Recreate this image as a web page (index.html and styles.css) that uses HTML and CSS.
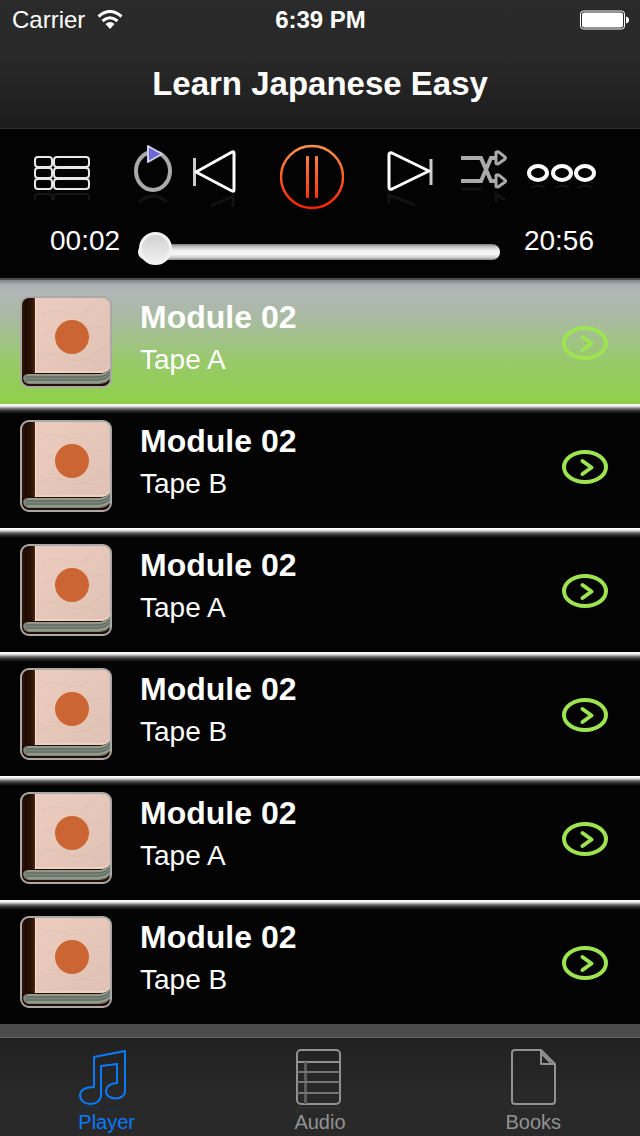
FILE: index.html
```html
<!DOCTYPE html>
<html lang="en">
<head>
    <meta charset="UTF-8">
    <meta name="viewport" content="width=device-width, initial-scale=1.0">
    <title>Learn Japanese Easy</title>
    <link rel="stylesheet" href="styles.css">
</head>
<body>
    <!-- Shared drawings -->
    <svg class="defs" aria-hidden="true">
        <defs>
            <linearGradient id="spine" x1="0" x2="1" y1="0" y2="0">
                <stop offset="0" stop-color="#4a2008"/>
                <stop offset="0.35" stop-color="#1c0a02"/>
                <stop offset="0.75" stop-color="#2a1205"/>
                <stop offset="1" stop-color="#4b260e"/>
            </linearGradient>
            <linearGradient id="cover" x1="0" x2="1" y1="0" y2="1">
                <stop offset="0" stop-color="#ecccbf"/>
                <stop offset="1" stop-color="#dfc2b5"/>
            </linearGradient>
            <linearGradient id="fire" x1="0" x2="0" y1="6" y2="68" gradientUnits="userSpaceOnUse">
                <stop offset="0" stop-color="#ff9152"/>
                <stop offset="0.5" stop-color="#ff5a22"/>
                <stop offset="1" stop-color="#ff2400"/>
            </linearGradient>
            <clipPath id="bookClip"><rect x="1" y="1" width="90" height="90" rx="8"/></clipPath>
            <symbol id="book" viewBox="0 0 92 92">
                <g clip-path="url(#bookClip)">
                    <rect width="92" height="92" fill="#260d04"/>
                    <path d="M15 0H92V68Q90 77 80 77H15Z" fill="url(#cover)"/>
                    <path d="M15 76H80Q89 76 91 69" fill="none" stroke="#f8dfc8" stroke-width="1"/>
                    <path d="M22 18Q34 12 46 17T72 12M20 62Q36 54 48 62T84 50M66 30Q74 36 88 28M22 40L34 34M60 62L82 66" fill="none" stroke="#d3b3a7" stroke-width="1" opacity="0.3"/>
                    <rect width="15" height="77" fill="url(#spine)"/>
                    <path d="M15.500 0V77" stroke="#f6e2da" stroke-width="1"/>
                    <path d="M8 78H80Q88 77 92 71V80Q88 88 79 88H10Q4 88 3 82Q4 78 8 78Z" fill="#7e877b"/>
                    <path d="M6 81H80Q87 80 91 74M6 84H80Q87 83 91 78" fill="none" stroke="#59635a" stroke-width="1"/>
                    <path d="M8 79H80Q87 78 91 73M8 86H79Q87 85 91 80" fill="none" stroke="#a3aca0" stroke-width="1"/>
                    <circle cx="52" cy="41" r="17" fill="#cb6634"/>
                </g>
                <rect x="1" y="1" width="90" height="90" rx="8" fill="none" stroke="#a9a9a9" stroke-width="2"/>
            </symbol>
            <symbol id="arrow" viewBox="0 0 46 34">
                <ellipse cx="23" cy="17" rx="21" ry="15" fill="none" stroke="#9ee451" stroke-width="4"/>
                <path d="M20.500 11L29.500 17.500L20.500 24" fill="none" stroke="#9ee451" stroke-width="4" stroke-linecap="round" stroke-linejoin="round"/>
            </symbol>
        </defs>
    </svg>

    <header class="navbar">
        <div class="status">
            <div class="carrier">
                <span>Carrier</span>
                <svg width="26" height="20" viewBox="0 0 26 20">
                    <path d="M1.500 6.500Q13 -3.500 24.500 6.500M5.500 11Q13 4.500 20.500 11" fill="none" stroke="#fff" stroke-width="3"/>
                    <path d="M8.500 14Q13 10 17.500 14L13 19Z" fill="#fff"/>
                </svg>
            </div>
            <span class="clock">6:39 PM</span>
            <svg class="battery" width="49" height="20" viewBox="0 0 49 20">
                <rect x="0.500" y="1" width="44" height="18" rx="3" fill="none" stroke="#fff"/>
                <rect x="2" y="2.500" width="41" height="15" rx="2" fill="#fff"/>
                <path d="M46 6.500Q49 7 49 10T46 13.500Z" fill="#fff"/>
            </svg>
        </div>
        <h1>Learn Japanese Easy</h1>
    </header>

    <section class="player">
        <div class="controls">
            <div class="side side-left">
                <button type="button" aria-label="Playlist">
                    <svg width="56" height="74" viewBox="0 0 56 74">
                        <g fill="none" stroke="#e8e8e8" stroke-width="2">
                            <rect x="1" y="17" width="17" height="10" rx="3"/>
                            <rect x="20" y="17" width="35" height="10" rx="3"/>
                            <rect x="1" y="28" width="17" height="10" rx="3"/>
                            <rect x="20" y="28" width="35" height="10" rx="3"/>
                            <rect x="1" y="39" width="17" height="10" rx="3"/>
                            <rect x="20" y="39" width="35" height="10" rx="3"/>
                        </g>
                        <path d="M1 60V56Q1 54 4 54H15Q18 54 18 56V60M20 60V56Q20 54 23 54H52Q55 54 55 56V60" fill="none" stroke="#161616" stroke-width="2"/>
                    </svg>
                </button>
                <div class="pair">
                    <button type="button" aria-label="Repeat">
                        <svg width="39" height="74" viewBox="0 0 39 74">
                            <ellipse cx="19" cy="31" rx="17" ry="19" fill="none" stroke="#aaa" stroke-width="4"/>
                            <path d="M14 6L28 14L14 22Z" fill="#6c66d6" stroke="#cfcfe8" stroke-width="2" stroke-linejoin="round"/>
                            <path d="M5 62Q19 50 33 62" fill="none" stroke="#121212" stroke-width="3"/>
                        </svg>
                    </button>
                    <button type="button" aria-label="Previous">
                        <svg width="43" height="74" viewBox="0 0 43 74">
                            <path d="M1.500 18V46" stroke="#ccc" stroke-width="3"/>
                            <path d="M3 32L39 12Q41 11 41 13V50Q41 52 39 51Z" fill="none" stroke="#fff" stroke-width="3" stroke-linejoin="round"/>
                            <path d="M18 66L40 56V66" fill="none" stroke="#121212" stroke-width="3"/>
                        </svg>
                    </button>
                </div>
            </div>
            <button type="button" aria-label="Pause">
                <svg width="64" height="74" viewBox="0 0 64 74">
                    <circle cx="32" cy="37" r="31" fill="none" stroke="url(#fire)" stroke-width="2.500"/>
                    <rect x="26" y="16" width="3" height="42" rx="1" fill="url(#fire)"/>
                    <rect x="35" y="16" width="3" height="42" rx="1" fill="url(#fire)"/>
                </svg>
            </button>
            <div class="side side-right">
                <button type="button" aria-label="Next">
                    <svg width="46" height="74" viewBox="0 0 46 74">
                        <path d="M44 19V45" stroke="#ccc" stroke-width="3"/>
                        <path d="M2 15Q2 12 5 13L42 31L5 49Q2 50 2 47Z" fill="none" stroke="#fff" stroke-width="3" stroke-linejoin="round"/>
                        <path d="M2 64V55L28 65" fill="none" stroke="#121212" stroke-width="3"/>
                    </svg>
                </button>
                <div class="pair">
                    <button type="button" aria-label="Shuffle">
                        <svg width="46" height="74" viewBox="0 0 46 74">
                            <g fill="none" stroke="#aaa" stroke-width="4">
                                <path d="M0 18H20L30 41H35M0 41H20L30 18H35"/>
                                <path d="M35 12.500Q37 11 39 13L44 17Q45 18 44 19L37 24Q35 24 35 23ZM35 35.500Q37 34 39 36L44 40Q45 41 44 42L37 47Q35 47 35 46Z" stroke-width="3"/>
                            </g>
                            <path d="M0 49H21M35 62V54L44 60" fill="none" stroke="#121212" stroke-width="3"/>
                        </svg>
                    </button>
                    <button type="button" aria-label="More">
                        <svg width="70" height="74" viewBox="0 0 70 74">
                            <g fill="none" stroke="#fff" stroke-width="4">
                                <ellipse cx="11" cy="33" rx="9" ry="7"/>
                                <ellipse cx="35" cy="33" rx="9" ry="7"/>
                                <ellipse cx="58" cy="33" rx="9" ry="7"/>
                            </g>
                            <path d="M4 48Q11 43 18 48M28 48Q35 43 42 48M51 48Q58 43 65 48" fill="none" stroke="#161616" stroke-width="2"/>
                        </svg>
                    </button>
                </div>
            </div>
        </div>
        <div class="progress">
            <span>00:02</span>
            <input type="range" min="0" max="1256" value="2" aria-label="Position">
            <span>20:56</span>
        </div>
    </section>

    <main>
        <ul class="tracks">
            <li class="track selected">
                <svg class="cover" width="92" height="92"><use href="#book"/></svg>
                <div class="info">
                    <h2>Module 02</h2>
                    <p>Tape A</p>
                </div>
                <button type="button" aria-label="Open Module 02, Tape A"><svg width="46" height="34"><use href="#arrow"/></svg></button>
            </li>
            <li class="track">
                <svg class="cover" width="92" height="92"><use href="#book"/></svg>
                <div class="info">
                    <h2>Module 02</h2>
                    <p>Tape B</p>
                </div>
                <button type="button" aria-label="Open Module 02, Tape B"><svg width="46" height="34"><use href="#arrow"/></svg></button>
            </li>
            <li class="track">
                <svg class="cover" width="92" height="92"><use href="#book"/></svg>
                <div class="info">
                    <h2>Module 02</h2>
                    <p>Tape A</p>
                </div>
                <button type="button" aria-label="Open Module 02, Tape A"><svg width="46" height="34"><use href="#arrow"/></svg></button>
            </li>
            <li class="track">
                <svg class="cover" width="92" height="92"><use href="#book"/></svg>
                <div class="info">
                    <h2>Module 02</h2>
                    <p>Tape B</p>
                </div>
                <button type="button" aria-label="Open Module 02, Tape B"><svg width="46" height="34"><use href="#arrow"/></svg></button>
            </li>
            <li class="track">
                <svg class="cover" width="92" height="92"><use href="#book"/></svg>
                <div class="info">
                    <h2>Module 02</h2>
                    <p>Tape A</p>
                </div>
                <button type="button" aria-label="Open Module 02, Tape A"><svg width="46" height="34"><use href="#arrow"/></svg></button>
            </li>
            <li class="track">
                <svg class="cover" width="92" height="92"><use href="#book"/></svg>
                <div class="info">
                    <h2>Module 02</h2>
                    <p>Tape B</p>
                </div>
                <button type="button" aria-label="Open Module 02, Tape B"><svg width="46" height="34"><use href="#arrow"/></svg></button>
            </li>
        </ul>
    </main>

    <nav class="tabbar">
        <a href="#player" class="active">
            <svg width="60" height="70" viewBox="0 0 60 70">
                <path d="M17 41V12L48 6V46C48 56 29 56 29 46Q29 39 40 38V19L24 21V50C24 62 3 62 3 50Q4 42 17 42Z" fill="none" stroke="currentColor" stroke-width="2" stroke-linejoin="round"/>
                <path d="M4 64Q13 58 23 64M29 66Q38 61 46 66" fill="none" stroke="#1c3047" stroke-width="2"/>
            </svg>
            <span>Player</span>
        </a>
        <a href="#audio">
            <svg width="60" height="70" viewBox="0 0 60 70">
                <g fill="none" stroke="currentColor" stroke-width="2">
                    <rect x="7" y="5" width="43" height="54" rx="4"/>
                    <path d="M7 17H50"/>
                    <path d="M15.500 17V59" stroke="#5c5c5c" stroke-width="3"/>
                    <path d="M7 27H50M7 37H50M7 48H50" stroke="#757575"/>
                </g>
                <path d="M7 67V64Q7 63 9 63H48Q50 63 50 65V67" fill="none" stroke="#303030" stroke-width="2"/>
            </svg>
            <span>Audio</span>
        </a>
        <a href="#books">
            <svg width="60" height="70" viewBox="0 0 60 70">
                <g fill="none" stroke="currentColor" stroke-width="2" stroke-linejoin="round">
                    <path d="M12 5H38L52 19V56Q52 59 49 59H12Q9 59 9 56V8Q9 5 12 5Z"/>
                    <path d="M38 5V19H52M38 8L48 18"/>
                </g>
                <path d="M9 67V65Q9 63 11 63H50Q52 63 52 65V67" fill="none" stroke="#303030" stroke-width="2"/>
            </svg>
            <span>Books</span>
        </a>
    </nav>
</body>
</html>
```
FILE: styles.css
```css
* {
    margin: 0;
    padding: 0;
    box-sizing: border-box;
}

body {
    display: flex;
    flex-direction: column;
    min-height: 100vh;
    background-color: #000;
    color: #fff;
    font-family: "Liberation Sans", Arial, sans-serif;
}

svg {
    display: block;
}

button {
    flex: none;
    background: none;
    border: none;
    cursor: pointer;
}

.defs {
    position: absolute;
    width: 0;
    height: 0;
}

/* Header */
.navbar {
    background: linear-gradient(#2a2a2a 0%, #292929 45%, #1d1c1c 100%);
    border-bottom: 1px solid #333;
}

.status {
    display: grid;
    grid-template-columns: 1fr auto 1fr;
    align-items: center;
    height: 40px;
    padding: 0 11px 0 12px;
    font-size: 24px;
}

.carrier {
    display: flex;
    align-items: center;
    gap: 12px;
}

.clock {
    font-weight: bold;
}

.battery {
    justify-self: end;
}

h1 {
    height: 88px;
    line-height: 88px;
    font-size: 33px;
    text-align: center;
}

/* Player controls */
.player {
    background-color: #030303;
    border-bottom: 2px solid #4c4c4c;
    padding-top: 11px;
}

.controls {
    display: grid;
    grid-template-columns: 1fr auto 1fr;
    padding-right: 16px;
}

.side {
    display: flex;
    justify-content: space-between;
}

.side-left {
    padding: 0 44px 0 34px;
}

.side-right {
    padding: 0 27px 0 43px;
}

.pair {
    display: flex;
    gap: 20px;
}

.progress {
    display: flex;
    align-items: center;
    gap: 18px;
    height: 64px;
    padding: 0 46px 10px 50px;
    font-size: 28px;
}

.progress input {
    flex: 1;
    min-width: 0;
    height: 34px;
    margin: 22px 6px 0 0;
    appearance: none;
    -webkit-appearance: none;
    background: none;
}

.progress input::-webkit-slider-runnable-track {
    height: 16px;
    border-radius: 8px;
    background: linear-gradient(#777, #bbb 15%, #f0f0f0 40%, #f6f6f6 65%, #ccc 85%, #888);
}

.progress input::-webkit-slider-thumb {
    -webkit-appearance: none;
    width: 33px;
    height: 33px;
    margin-top: -12px;
    border: 3px solid #f2f2f2;
    border-radius: 50%;
    background: linear-gradient(#d2d2d2, #efefef);
}

/* Track list */
main {
    flex: 1;
    padding-bottom: 13px;
    background-color: #4c4c4c;
}

.tracks {
    list-style: none;
}

.track {
    display: flex;
    align-items: center;
    gap: 28px;
    height: 124px;
    padding: 0 32px 0 20px;
    background: linear-gradient(#fff 0, #fff 1px, #ccc 3px, #888 4px, #444 6px, #1c1c1c 8px, #030303 10px);
}

.track.selected {
    background: linear-gradient(#7f8587 0, #adb3b6 5px, #b0b6b7 12px, #a8bba0 40px, #99c96c 80px, #8ed047 124px);
}

.track button {
    margin-top: 2px;
}

.cover {
    flex: none;
}

.info {
    flex: 1;
}

h2 {
    font-size: 32px;
    line-height: 42px;
}

.info p {
    margin-bottom: 6px;
    font-size: 28px;
    line-height: 44px;
}

/* Tab bar */
.tabbar {
    display: flex;
    height: 99px;
    background: linear-gradient(#212121, #292929 60%);
    border-top: 1px solid #666;
}

.tabbar a {
    flex: 1;
    display: flex;
    flex-direction: column;
    align-items: center;
    padding-top: 7px;
    color: #929292;
    font-size: 20px;
    line-height: 14px;
    text-decoration: none;
}

.tabbar a.active {
    color: #0a7aff;
}
```
